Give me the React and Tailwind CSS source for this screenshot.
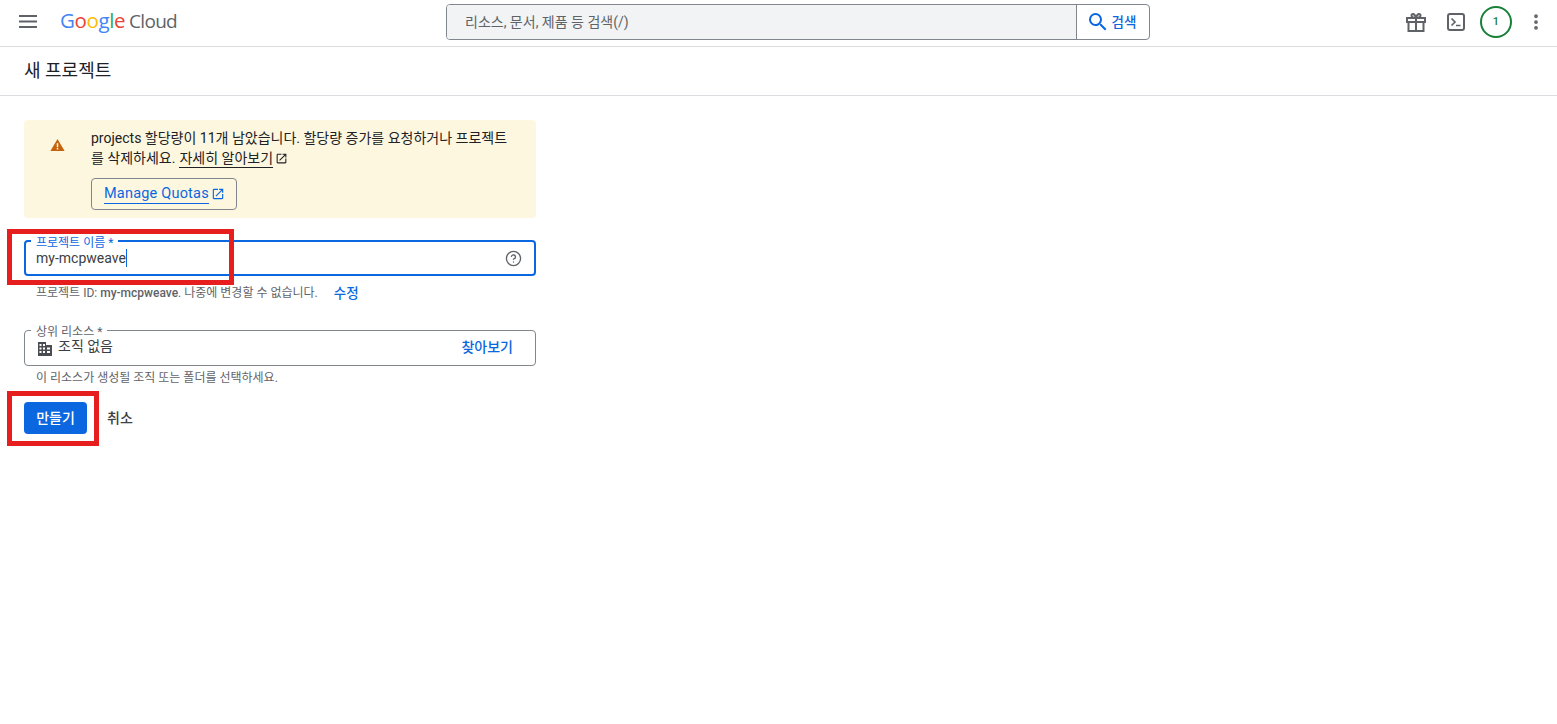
import { EllipsisVertical, CircleHelp } from "lucide-react";

function OpenInNew({ size, className }) {
  return (
    <svg width={size} height={size} viewBox="0 0 24 24" fill="currentColor" className={className}>
      <path d="M19 19H5V5h7V3H5a2 2 0 0 0-2 2v14c0 1.1.9 2 2 2h14c1.1 0 2-.9 2-2v-7h-2v7zM14 3v2h3.59l-9.83 9.83 1.41 1.41L19 6.41V10h2V3h-7z" />
    </svg>
  );
}

function Logo() {
  return (
    <div className="flex items-baseline ml-[23px] mt-[-3px] text-[20.5px] leading-none tracking-[-0.4px] font-['Open_Sans',sans-serif]">
      <span className="text-[#4285f4]">G</span>
      <span className="text-[#ea4335]">o</span>
      <span className="text-[#fbbc04]">o</span>
      <span className="text-[#4285f4]">g</span>
      <span className="text-[#34a853]">l</span>
      <span className="text-[#ea4335]">e</span>
      <span className="text-[#5f6368] ml-[4px] text-[19px] tracking-[-0.7px]">Cloud</span>
    </div>
  );
}

function Header() {
  return (
    <header className="h-[47px] border-b border-[#dadce0] flex items-center pb-[2px] shrink-0">
      <div className="flex items-center w-[446px] pl-[19px]">
        <svg width="18" height="14" viewBox="0 0 18 14" fill="#5f6368">
          <rect y="0" width="18" height="2" />
          <rect y="5.5" width="18" height="2" />
          <rect y="11" width="18" height="2" />
        </svg>
        <Logo />
      </div>
      <div className="w-[704px] h-[36px] flex rounded-[4px] border border-[#80868b] overflow-hidden">
        <div className="flex-1 bg-[#f1f3f4] pl-[18px] flex items-center text-[14px] text-[#5f6368]">
          리소스, 문서, 제품 등 검색(/)
        </div>
        <div className="w-[73px] border-l border-[#80868b] flex items-center justify-center gap-[2px] pr-[4px] text-[#0b67e0] font-medium">
          <svg width="24" height="24" viewBox="0 0 24 24" fill="currentColor">
            <path d="M15.5 14h-.79l-.28-.27A6.471 6.471 0 0 0 16 9.5 6.5 6.5 0 1 0 9.5 16c1.61 0 3.09-.59 4.23-1.57l.27.28v.79l5 4.99L20.49 19l-4.99-5zm-6 0C7.01 14 5 11.99 5 9.5S7.01 5 9.5 5 14 7.01 14 9.5 11.99 14 9.5 14z" />
          </svg>
          <span className="text-[13.5px]">검색</span>
        </div>
      </div>
      <div className="ml-auto flex items-center pr-[11px]">
        <svg width="20" height="20" viewBox="0 0 20 20" fill="none" stroke="#5f6368" strokeWidth="2" className="mr-[21px]">
          <rect x="1" y="6" width="18" height="4" />
          <path d="M2.5 10v9h15v-9M10 6v13" />
          <path d="M10 6C8 6 5.5 5.5 5.5 3.2 5.5 1.6 8.500 0.800 10 6c1.500-5.200 4.500-4.400 4.500-2.800C14.500 5.500 12 6 10 6z" />
        </svg>
        <svg width="18" height="18" viewBox="0 0 18 18" fill="none" stroke="#5f6368" strokeWidth="2" className="mr-[15px]">
          <rect x="1" y="1" width="16" height="16" rx="2" />
          <path d="M4.500 5.500 8 9l-3.500 3.500M9 12.500h4.500" strokeWidth="1.700" />
        </svg>
        <div className="w-[32px] h-[32px] rounded-full border-2 border-[#188038] flex items-center justify-center text-[11px] font-medium text-[#188038] mr-[14px]">
          1
        </div>
        <EllipsisVertical size={20} strokeWidth={2.5} className="text-[#5f6368]" />
      </div>
    </header>
  );
}

function Alert() {
  return (
    <div className="bg-[#fef7e0] rounded-[4px] h-[98px] flex pt-[8px] text-[14px] text-[#202124]">
      <div className="w-[67px] flex justify-center pt-[10px] pr-[1px] shrink-0">
        <svg width="15" height="14" viewBox="0 0 16 14">
          <path d="M8 0.5 L15.600 13.500 H0.400 Z" fill="#c5620b" />
          <rect x="7.200" y="5" width="1.600" height="4.400" fill="#fef7e0" />
          <rect x="7.200" y="10.200" width="1.600" height="1.600" fill="#fef7e0" />
        </svg>
      </div>
      <div className="flex-1 pr-[24px]">
        <p className="leading-[20px] m-0 whitespace-nowrap">projects 할당량이 11개 남았습니다. 할당량 증가를 요청하거나 프로젝트</p>
        <p className="leading-[20px] m-0 flex items-center whitespace-nowrap">
          를 삭제하세요.
          <span className="ml-[4px] border-b border-[#202124] h-[20px]">자세히 알아보기</span>
          <OpenInNew size={13} className="ml-[2px]" />
        </p>
        <button className="mt-[10px] h-[32px] w-[146px] border border-[#80868b] rounded-[4px] flex items-center pl-[12px] text-[14.5px] tracking-[0.2px] text-[#0b67e0]">
          <span className="border-b border-[#0b67e0] leading-[18px]">Manage Quotas</span>
          <OpenInNew size={14} className="ml-[2px]" />
        </button>
      </div>
    </div>
  );
}

function ProjectName() {
  return (
    <div className="mt-[22px]">
      <div className="relative h-[36px] border-2 border-[#0b67e0] rounded-[4px] flex items-center pl-[10px] pr-[12px]">
        <span className="absolute left-[5px] top-[-5px] bg-white px-[5px] text-[12px] leading-[12px] text-[#0b67e0]">프로젝트 이름 *</span>
        <span className="text-[14px] text-[#3c4043] border-r border-[#0b67e0] leading-[18px] mt-[-1px]">my-mcpweave</span>
        <CircleHelp size={17} strokeWidth={1.9} className="ml-auto text-[#5f6368]" />
      </div>
      <div className="flex items-center pl-[12px] mt-[8px] h-[18px] text-[12px] text-[#5f6368]">
        <span>
          프로젝트 ID: <span className="font-medium">my-mcpweave</span>. 나중에 변경할 수 없습니다.
        </span>
        <span className="ml-[16px] text-[13.5px] font-medium text-[#0b67e0]">수정</span>
      </div>
    </div>
  );
}

function ParentResource() {
  return (
    <div className="mt-[28px]">
      <div className="relative h-[36px] border border-[#80868b] rounded-[4px] flex items-center pl-[12px] pr-[22px]">
        <span className="absolute left-[6px] top-[-5px] bg-white px-[5px] text-[12px] leading-[12px] text-[#5f6368]">상위 리소스 *</span>
        <svg width="16" height="14" viewBox="0 0 16 14" className="mt-[2px] mr-[5px]">
          <path fillRule="evenodd" fill="#494c50" d="M1 0h8v3h6v11H1z M2.500 2v2h2V2z M6 2v2h2V2z M2.500 5.500v2h2v-2z M6 5.500v2h2v-2z M2.500 9v2h2V9z M6 9v2h2V9z M10 5.500v2h3v-2z M10 9v2h3V9z" />
        </svg>
        <span className="text-[14px] text-[#3c4043] mt-[-3px]">조직 없음</span>
        <span className="ml-auto text-[14px] font-medium text-[#0b67e0] mt-[-1px]">찾아보기</span>
      </div>
      <p className="pl-[12px] mt-[3px] m-0 h-[18px] leading-[18px] text-[12px] text-[#5f6368]">
        이 리소스가 생성될 조직 또는 폴더를 선택하세요.
      </p>
    </div>
  );
}

export default function App() {
  return (
    <div className="w-[1557px] h-[724px] bg-white relative overflow-hidden flex flex-col font-['Roboto','Noto_Sans_CJK_KR',sans-serif]">
      <Header />
      <div className="h-[49px] border-b border-[#dadce0] flex items-center pl-[24px] pb-[2px] text-[18px] text-[#202124] shrink-0">
        새 프로젝트
      </div>
      <main className="w-[512px] ml-[24px] mt-[24px]">
        <Alert />
        <ProjectName />
        <ParentResource />
        <div className="flex items-center mt-[15px]">
          <button className="w-[63px] h-[32px] rounded-[4px] bg-[#0b67e0] text-white text-[14px] font-medium">만들기</button>
          <span className="ml-[20px] text-[14px] font-medium text-[#3c4043]">취소</span>
        </div>
      </main>
      {/* red annotation boxes */}
      <div className="absolute left-[7px] top-[229px] w-[227px] h-[56px] border-[5px] border-[#e61e1e]" />
      <div className="absolute left-[7px] top-[391px] w-[92px] h-[55px] border-[5px] border-[#e61e1e]" />
    </div>
  );
}
